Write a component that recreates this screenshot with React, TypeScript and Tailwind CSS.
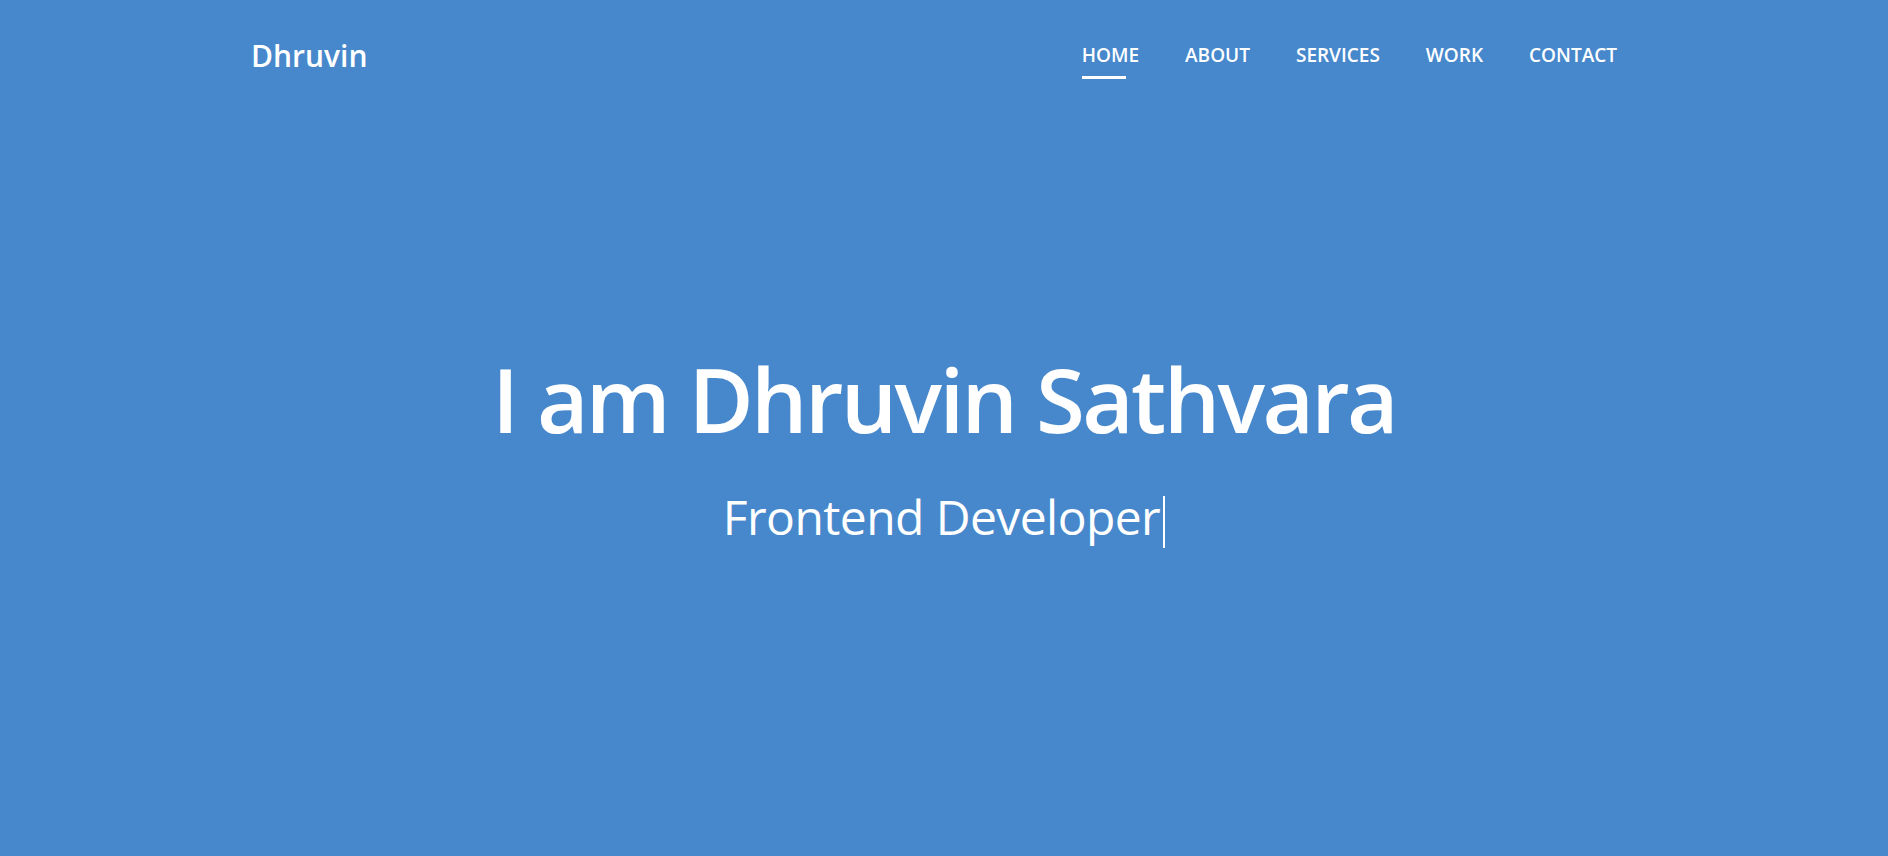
import React from 'react';

const links = ['HOME', 'ABOUT', 'SERVICES', 'WORK', 'CONTACT'];

export default function App() {
  return (
    <div
      className="h-[856px] w-full bg-[#4788cc] text-white flex flex-col"
      style={{ fontFamily: '"Open Sans", "Noto Sans", sans-serif' }}
    >
      <header className="flex items-center justify-between pl-[251px] pr-[271px] h-[110px]">
        <a href="#" className="text-[30px] font-semibold">
          Dhruvin
        </a>
        <nav className="flex items-center gap-[46px]">
          {links.map((link, i) => (
            <a key={link} href="#" className="relative text-[19px] font-semibold">
              {link}
              {i === 0 && (
                <span className="absolute left-0 -bottom-[10px] h-[3px] w-[44px] bg-white" />
              )}
            </a>
          ))}
        </nav>
      </header>

      <main className="flex flex-col items-center pt-[244px]">
        <h1 className="text-[89px] font-semibold leading-none tracking-[-0.03em]">
          I am Dhruvin Sathvara
        </h1>
        <p className="mt-[50px] text-[48px] leading-none tracking-[-0.012em]">
          Frontend Developer
          <span className="inline-block align-middle ml-[3px] w-[2px] h-[52px] bg-white" />
        </p>
      </main>
    </div>
  );
}
